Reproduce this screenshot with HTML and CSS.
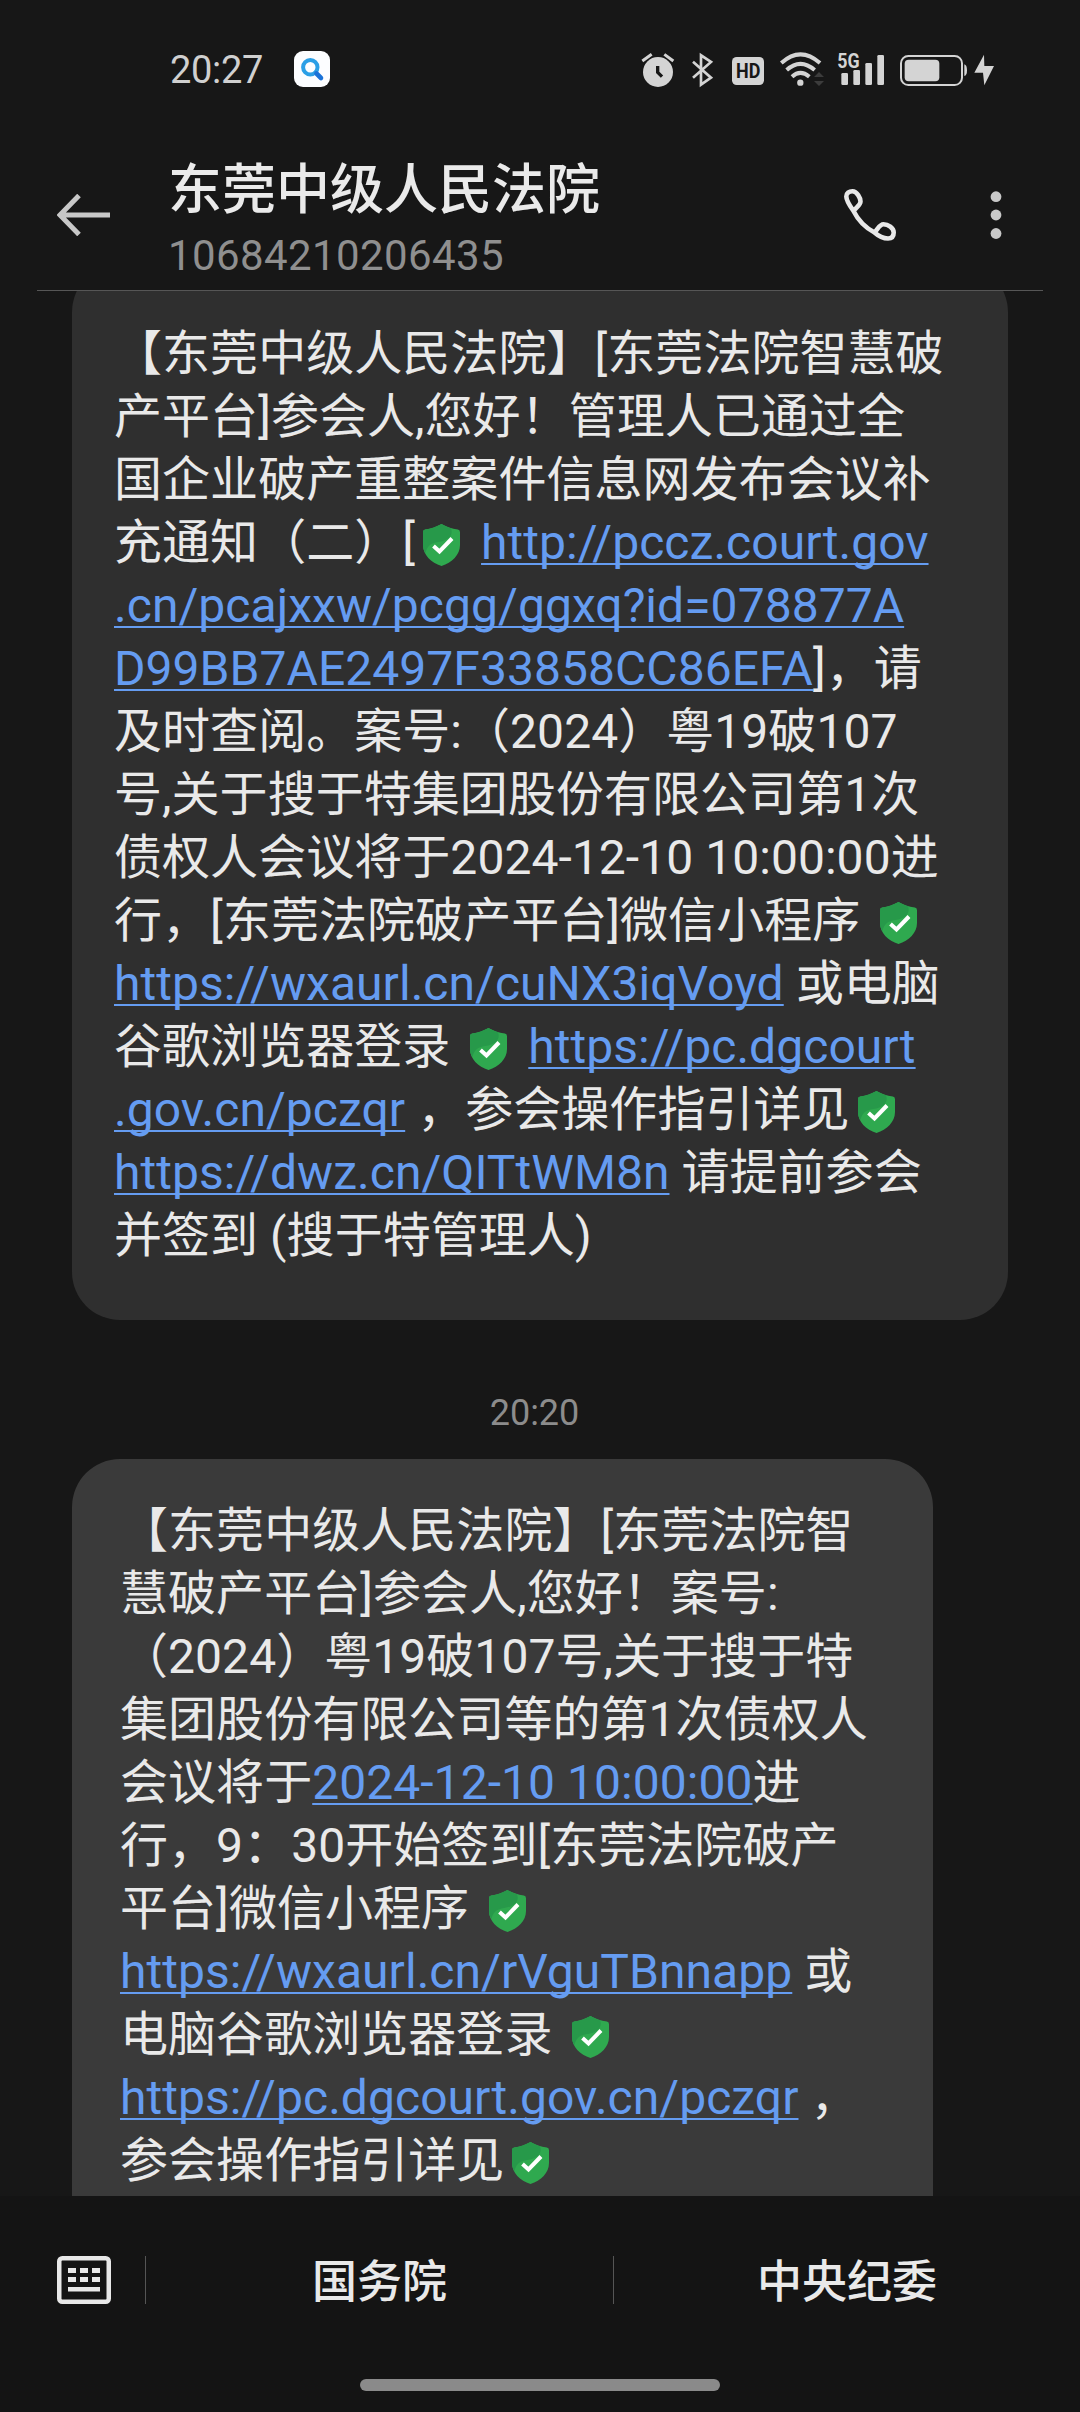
FILE: index.html
```html
<!DOCTYPE html>
<html lang="zh-CN">
<head>
<meta charset="utf-8">
<title>东莞中级人民法院</title>
<link rel="stylesheet" href="styles.css">
</head>
<body>
<svg class="defs" width="0" height="0" aria-hidden="true">
  <symbol id="shield" viewBox="0 0 37 42">
    <path fill="#2fa94f" d="M18.5 0C23 2.6 29 4.6 34.8 5.6Q37 6 37 8.2V21C37 31 29 38.500 18.500 42C8 38.500 0 31 0 21V8.200Q0 6 2.200 5.600C8 4.600 14 2.600 18.500 0Z"/>
    <path fill="#27994a" d="M18.500 0C23 2.600 26 3.700 28 4.200C31 12 24 17 15 18C8 19 4 22 2.500 29C.8 26.500 0 24 0 21V8.200Q0 6 2.200 5.600C8 4.600 14 2.600 18.500 0Z"/>
    <path fill="none" stroke="#fff" stroke-width="4" d="M10.500 22L16.500 27.500L29 14.500"/>
  </symbol>
</svg>

<div class="phone">
  <header class="status">
    <span class="clock">20:27</span>
    <svg class="app-badge" viewBox="0 0 36 36">
      <rect width="36" height="36" rx="9" fill="#fcfdff"/>
      <circle cx="16.300" cy="16.300" r="7.200" fill="none" stroke="#2b9fe6" stroke-width="4"/>
      <path d="M22.500 22.500L27 27" stroke="#1a72d8" stroke-width="4.600" stroke-linecap="round"/>
    </svg>
    <div class="tray">
      <svg width="42" height="40" viewBox="60 54 126 120">
        <circle cx="114" cy="123" r="45" fill="#d4d4d4"/>
        <path d="M67 90L95 70M133 70L160 90" stroke="#d4d4d4" stroke-width="9"/>
        <path d="M113 105V124L126 137" fill="none" stroke="#171717" stroke-width="10"/>
      </svg>
      <svg width="40" height="40" viewBox="186 54 120 120">
        <path d="M219 92L273 140L243 161V73L273 93L219 140" fill="none" stroke="#d4d4d4" stroke-width="8"/>
      </svg>
      <svg width="50" height="40" viewBox="306 54 150 120">
        <rect x="336" y="78" width="96" height="84" rx="14" fill="#d4d4d4"/>
        <text x="348" y="142" textLength="73" lengthAdjust="spacingAndGlyphs" class="hd">HD</text>
      </svg>
      <svg width="57" height="40" viewBox="456 54 171 120">
        <path d="M484 96Q541 44 600 96M500 117Q541 80 584 117M516 137Q541 114 568 137" fill="none" stroke="#d4d4d4" stroke-width="12"/>
        <circle cx="541" cy="155" r="9.500" fill="#d4d4d4"/>
        <path d="M582 138L597 123L612 138ZM582 150H612L597 165Z" fill="#3c3c3c"/>
      </svg>
      <svg width="63" height="40" viewBox="627 54 189 120">
        <g fill="#d4d4d4">
          <rect x="664" y="126" width="20" height="36" rx="4"/>
          <rect x="700" y="117" width="20" height="45" rx="4"/>
          <rect x="736" y="96" width="20" height="66" rx="4"/>
          <rect x="772" y="72" width="20" height="90" rx="4"/>
          <text x="652" y="111" textLength="67" lengthAdjust="spacingAndGlyphs" class="net">5G</text>
        </g>
      </svg>
      <svg width="78" height="40" viewBox="816 54 234 120">
        <rect x="843" y="75" width="183" height="87" rx="22" fill="none" stroke="#d4d4d4" stroke-width="6"/>
        <rect x="854" y="86" width="104" height="65" rx="12" fill="#d4d4d4"/>
        <path d="M1033 100Q1041 102 1041 118T1033 135Z" fill="#d4d4d4"/>
      </svg>
      <svg width="30" height="40" viewBox="1050 54 90 120">
        <path d="M1092 71L1063 125H1089L1093 163L1122 105H1093Z" fill="#d4d4d4"/>
      </svg>
    </div>
  </header>

  <div class="titlebar">
    <svg class="back" viewBox="0 0 54 42"><path d="M22 1.500L3 21L22 40.500M3 21H53" fill="none" stroke="#c8c8c8" stroke-width="5"/></svg>
    <div class="contact">
      <h1 class="name">东莞中级人民法院</h1>
      <p class="number">10684210206435</p>
    </div>
    <svg class="call" viewBox="0 0 52 52">
      <path d="M9.500 22C4.500 15 2.300 11 2.300 7.500C2.300 4 5 2.300 8.500 2.300C13 2.300 16.500 9 16.500 12.500C16.500 16 12.500 18 9.500 22C14 31 22 39 30.500 43.500C35 47.500 40 49.500 44 49.500C48 49.500 49.700 47 49.700 43.500C49.700 39 44 35.300 39.500 35.300C35.500 35.300 34 40 30.500 43.500" fill="none" stroke="#e8e8e8" stroke-width="4.600" stroke-linejoin="round"/>
    </svg>
    <svg class="more" viewBox="0 0 12 50"><g fill="#c8c8c8"><circle cx="6" cy="6.700" r="5.400"/><circle cx="6" cy="25" r="5.400"/><circle cx="6" cy="43.500" r="5.400"/></g></svg>
  </div>

  <main class="thread">
    <article class="bubble bubble-old">【东莞中级人民法院】[东莞法院智慧破<br>产平台]参会人,您好！管理人已通过全<br>国企业破产重整案件信息网发布会议补<br>充通知（二）[<svg class="safe"><use href="#shield"/></svg> <a class="link">http://pccz.court.gov</a><br><a class="link">.cn/pcajxxw/pcgg/ggxq?id=078877A</a><br><a class="link">D99BB7AE2497F33858CC86EFA</a>]，请<br>及时查阅。案号:（2024）粤19破107<br>号,关于搜于特集团股份有限公司第1次<br>债权人会议将于2024-12-10 10:00:00进<br>行，[东莞法院破产平台]微信小程序 <svg class="safe"><use href="#shield"/></svg><br><a class="link">https://wxaurl.cn/cuNX3iqVoyd</a> 或电脑<br>谷歌浏览器登录 <svg class="safe"><use href="#shield"/></svg> <a class="link">https://pc.dgcourt</a><br><a class="link">.gov.cn/pczqr</a> ，参会操作指引详见<svg class="safe"><use href="#shield"/></svg><br><a class="link">https://dwz.cn/QITtWM8n</a> 请提前参会<br>并签到 (搜于特管理人)</article>
    <time class="stamp">20:20</time>
    <article class="bubble bubble-new">【东莞中级人民法院】[东莞法院智<br>慧破产平台]参会人,您好！案号:<br>（2024）粤19破107号,关于搜于特<br>集团股份有限公司等的第1次债权人<br>会议将于<a class="link">2024-12-10 10:00:00</a>进<br>行，9：30开始签到[东莞法院破产<br>平台]微信小程序 <svg class="safe"><use href="#shield"/></svg><br><a class="link">https://wxaurl.cn/rVguTBnnapp</a> 或<br>电脑谷歌浏览器登录 <svg class="safe"><use href="#shield"/></svg><br><a class="link">https://pc.dgcourt.gov.cn/pczqr</a> ，<br>参会操作指引详见<svg class="safe"><use href="#shield"/></svg></article>
  </main>

  <footer class="bottom">
    <nav class="menu">
      <div class="keyboard">
        <svg width="54" height="48" viewBox="0 0 54 48">
          <rect x="2.250" y="2.250" width="49.500" height="43.500" rx="3" fill="none" stroke="#e8e8e8" stroke-width="4.500"/>
          <path d="M11 12h8v5h-8zM23 12h8v5h-8zM35 12h8v5h-8zM11 21h8v5h-8zM23 21h8v5h-8zM35 21h8v5h-8zM11 31h32v4.500h-32z" fill="#e8e8e8"/>
        </svg>
      </div>
      <div class="item">国务院</div>
      <div class="item">中央纪委</div>
    </nav>
    <div class="home"></div>
  </footer>
</div>
</body>
</html>
```
FILE: styles.css
```css
* { box-sizing: border-box; }

body {
  margin: 0;
  background: #171717;
  color: #e9e9e9;
  font-family: Roboto, "Noto Sans CJK SC", sans-serif;
  text-spacing-trim: space-all;
}

.defs { display: none; }
.phone {
  width: 1080px;
  height: 2412px;
  display: flex;
  flex-direction: column;
  overflow: hidden;
}

/* status bar */
.status {
  height: 140px;
  flex: none;
  display: flex;
  align-items: center;
  padding: 0 80px 2px 170px;
}
.clock {
  width: 124px;
  padding-top: 2px;
  font-size: 38px;
  line-height: 44px;
  letter-spacing: -0.3px;
  color: #d0d0d0;
}
.app-badge { width: 36px; height: 36px; }
.tray { display: flex; margin-left: auto; }
.tray svg { display: block; }
.hd { font: 700 62px Roboto, sans-serif; fill: #171717; }
.net { font: 700 60px Roboto, sans-serif; }

/* title bar */
.titlebar {
  height: 150px;
  flex: none;
  display: flex;
  align-items: center;
  padding: 0 78px 0 57px;
}
.back { width: 54px; height: 42px; }
.contact { margin-left: 57px; margin-right: auto; padding-top: 8px; }
.name {
  margin: 0;
  font-size: 54px;
  font-weight: 500;
  line-height: 74px;
  color: #eaeaea;
}
.number {
  margin: 0;
  font-size: 42px;
  line-height: 56px;
  letter-spacing: 0.4px;
  color: #8f8f8f;
}
.call { width: 52px; height: 52px; margin-right: 94px; }
.more { width: 12px; height: 50px; }

/* conversation */
.thread {
  flex: none;
  position: relative;
  height: 1906px;
  overflow: hidden;
  display: flex;
  flex-direction: column;
  align-items: flex-start;
}
.thread::before {
  content: "";
  position: absolute;
  left: 37px;
  top: 0;
  width: 1006px;
  height: 1px;
  background: #565656;
}
.bubble {
  flex: none;
  margin-left: 72px;
  border-radius: 48px;
  font-size: 48px;
  line-height: 63px;
  letter-spacing: 0.05px;
  white-space: nowrap;
}
.bubble-old {
  width: 936px;
  height: 1056px;
  margin-top: -26px;
  padding: 58px 42px 0;
  background: #2f2f2f;
}
.bubble-new {
  width: 861px;
  height: 900px;
  padding: 40px 48px 0;
  background: #3a3a3a;
}
.link {
  color: #659cf1;
  text-decoration: underline;
  text-decoration-thickness: 2px;
  text-underline-offset: 4px;
  text-decoration-skip-ink: none;
}
.safe {
  width: 37px;
  height: 42px;
  margin: 0 9px 0 8px;
  vertical-align: -7px;
}
.stamp {
  flex: none;
  align-self: center;
  height: 139px;
  padding-top: 72px;
  padding-right: 11px;
  font-size: 36px;
  line-height: 42px;
  color: #8c8c8c;
}

/* bottom menu */
.bottom {
  flex: 1;
  display: flex;
  flex-direction: column;
  align-items: center;
  background: #141414;
  padding-top: 60px;
}
.menu {
  width: 1080px;
  height: 48px;
  display: grid;
  grid-template-rows: 48px;
  grid-template-columns: 145px 468px 467px;
}
.keyboard { padding-left: 57px; }
.keyboard svg { display: block; }
.item {
  display: flex;
  align-items: center;
  justify-content: center;
  border-left: 1px solid #555;
  font-size: 45px;
  font-weight: 500;
  line-height: 42px;
  padding-top: 6px;
}
.home {
  width: 360px;
  height: 12px;
  margin-top: 75px;
  border-radius: 6px;
  background: #8a8a8a;
}
```
